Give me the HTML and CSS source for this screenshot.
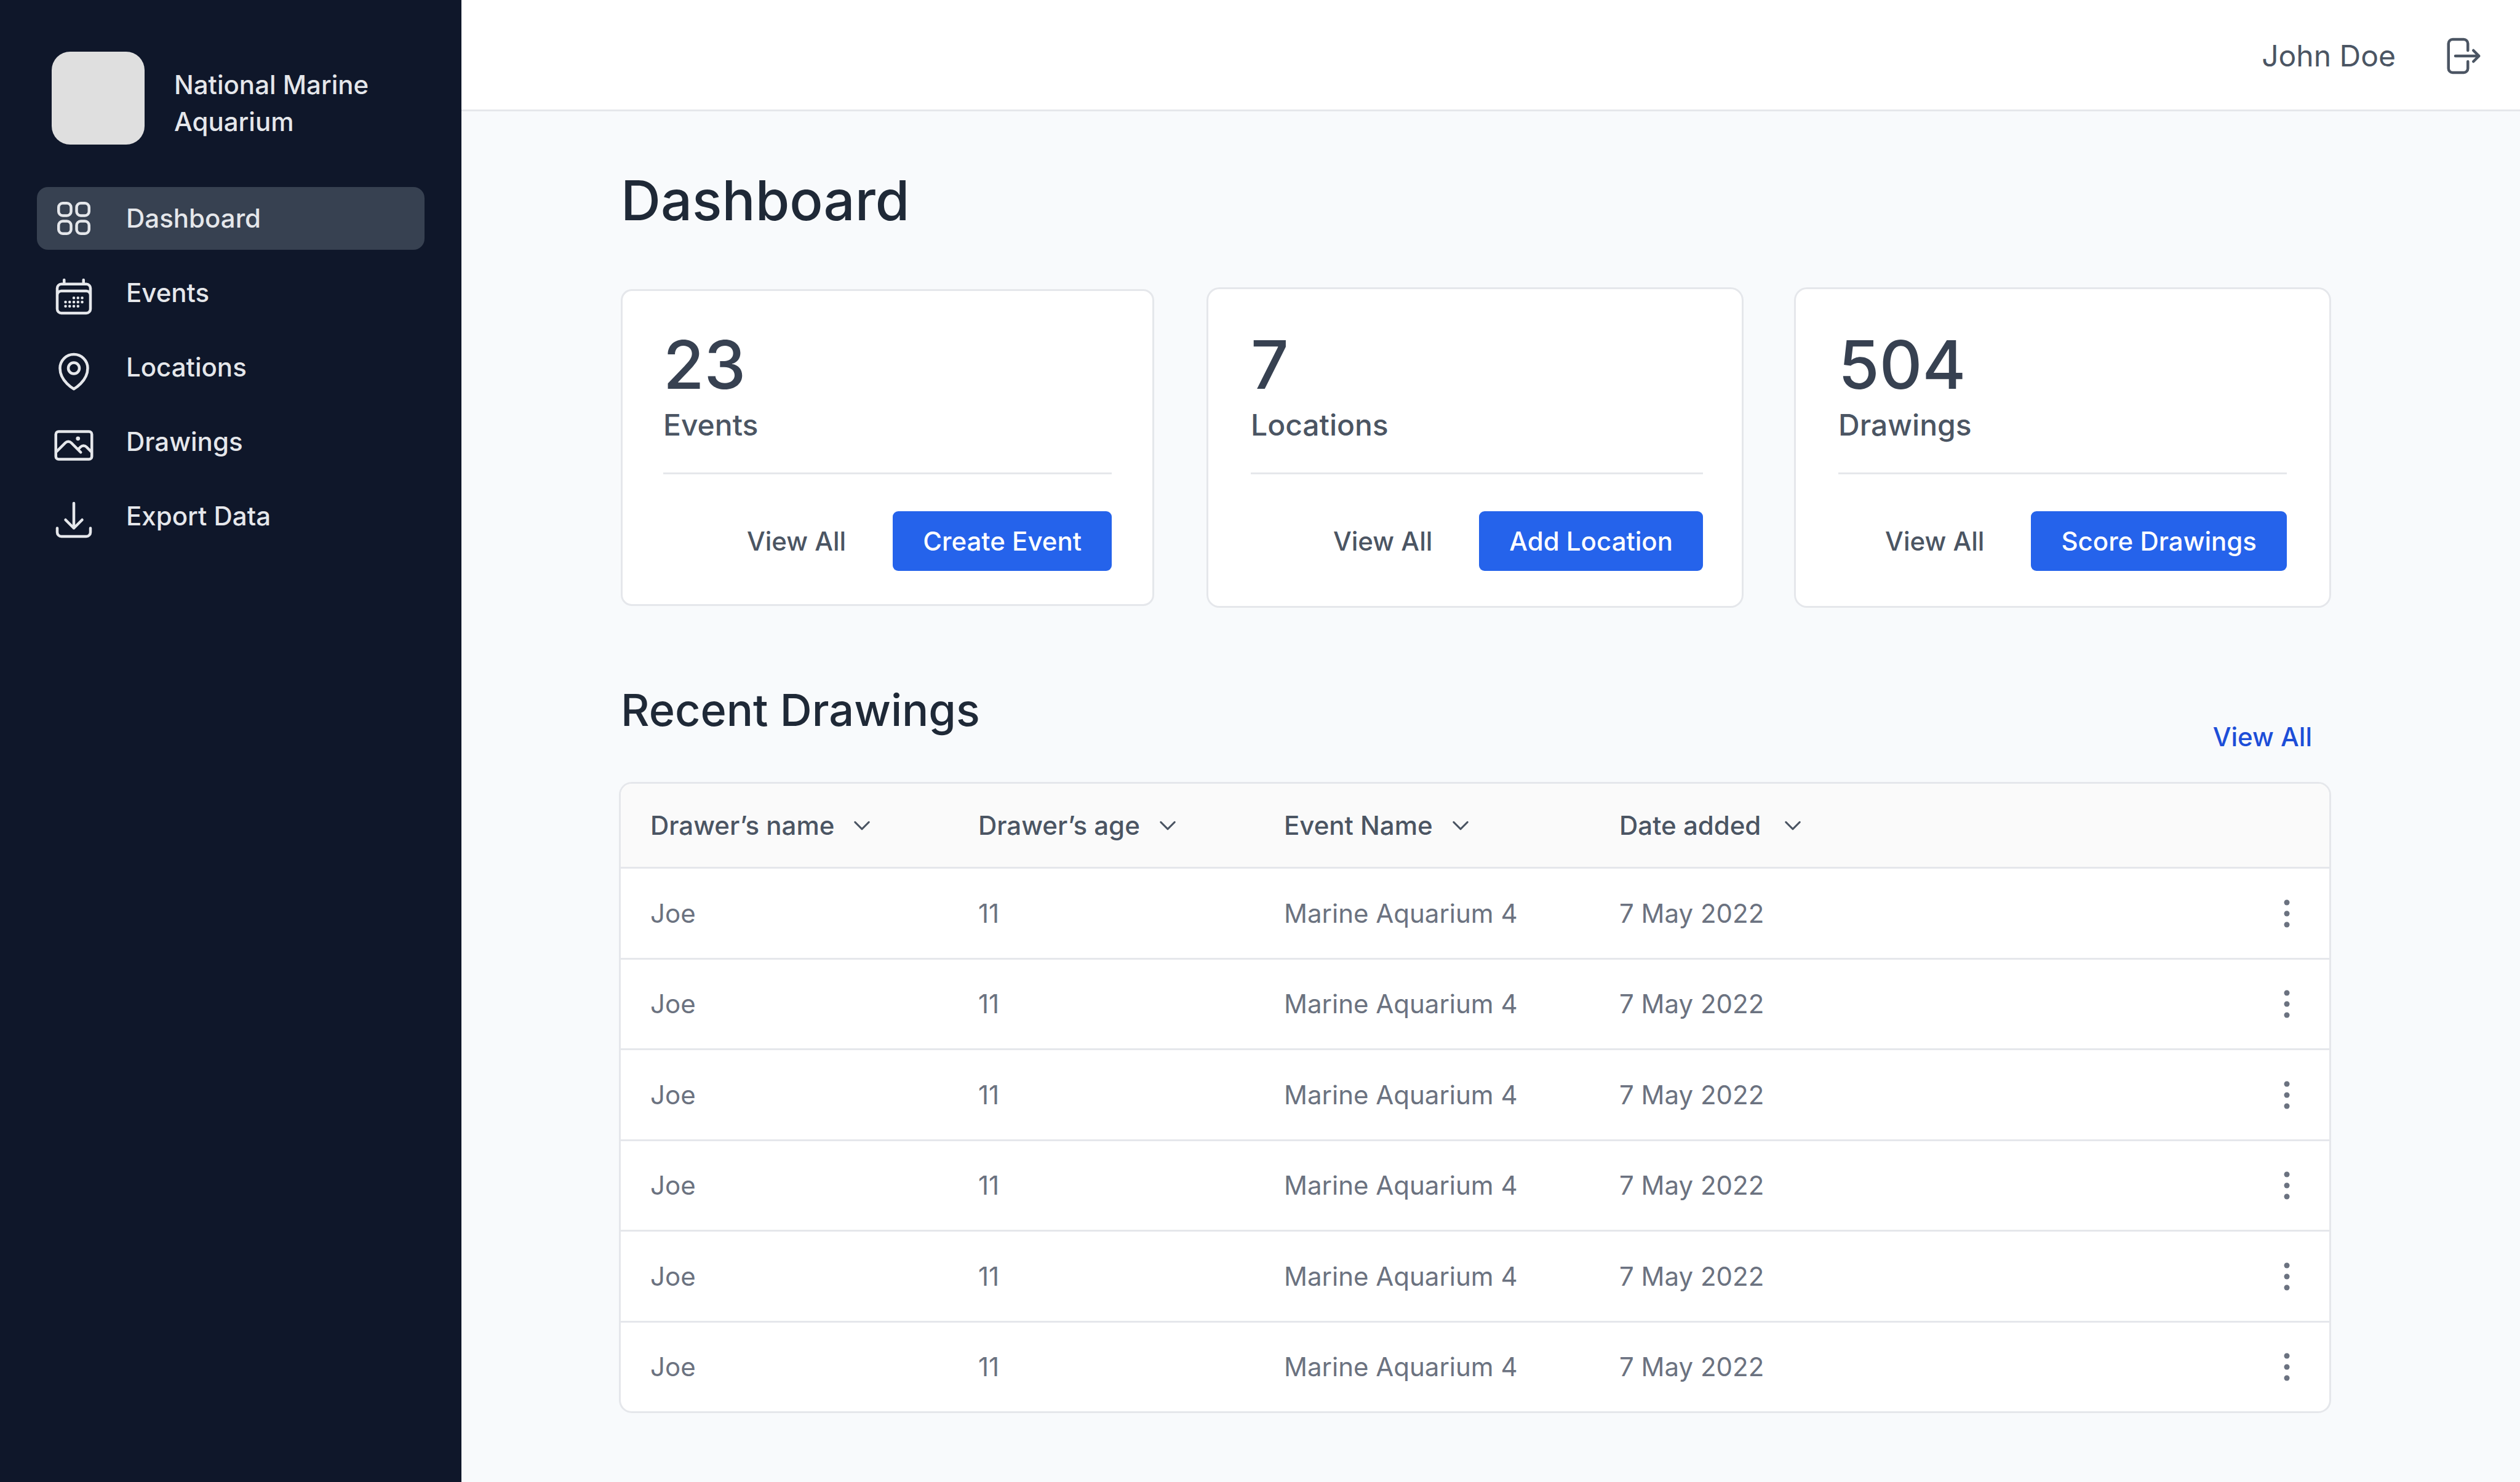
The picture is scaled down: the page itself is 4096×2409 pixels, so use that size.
FILE: index.html
```html
<!DOCTYPE html>
<html lang="en">
<head>
  <meta charset="utf-8">
  <title>Dashboard</title>
  <link rel="stylesheet" href="styles.css">
</head>
<body>
  <svg class="sprite" aria-hidden="true">
    <symbol id="chevron" viewBox="0 0 24 24"><path d="M19.5 8.25l-7.5 7.5-7.5-7.5"/></symbol>
    <symbol id="dots" viewBox="0 0 24 24"><circle cx="12" cy="6" r="1.5"/><circle cx="12" cy="12" r="1.5"/><circle cx="12" cy="18" r="1.5"/></symbol>
  </svg>
  <div class="app">
    <aside class="sidebar">
      <div class="brand">
        <div class="brand-logo"></div>
        <p class="brand-name">National Marine Aquarium</p>
      </div>
      <nav class="nav">
        <a class="nav-link active" href="#dashboard" aria-current="page">
          <svg class="icon" viewBox="0 0 24 24"><path d="M3.75 6A2.25 2.25 0 016 3.75h2.25A2.25 2.25 0 0110.5 6v2.25a2.25 2.25 0 01-2.25 2.25H6a2.25 2.25 0 01-2.25-2.25V6zM3.75 15.75A2.25 2.25 0 016 13.5h2.25a2.25 2.25 0 012.25 2.25V18a2.25 2.25 0 01-2.25 2.25H6A2.25 2.25 0 013.75 18v-2.25zM13.5 6a2.25 2.25 0 012.25-2.25H18A2.25 2.25 0 0120.25 6v2.25A2.25 2.25 0 0118 10.5h-2.25a2.25 2.25 0 01-2.25-2.25V6zM13.5 15.75a2.25 2.25 0 012.25-2.25H18a2.25 2.25 0 012.25 2.25V18A2.25 2.25 0 0118 20.25h-2.25A2.25 2.25 0 0113.5 18v-2.25z"/></svg>
          <span>Dashboard</span>
        </a>
        <a class="nav-link" href="#events">
          <svg class="icon" viewBox="0 0 24 24"><path d="M6.75 3v2.25M17.25 3v2.25M3 18.75V7.5a2.25 2.25 0 012.25-2.25h13.5A2.25 2.25 0 0121 7.5v11.25m-18 0A2.25 2.25 0 005.25 21h13.5A2.25 2.25 0 0021 18.75m-18 0v-7.5A2.25 2.25 0 015.25 9h13.5A2.25 2.25 0 0121 11.25v7.5m-9-6h.008v.008H12v-.008zM12 15h.008v.008H12V15zm0 2.25h.008v.008H12v-.008zM9.75 15h.008v.008H9.75V15zm0 2.25h.008v.008H9.75v-.008zM7.5 15h.008v.008H7.5V15zm0 2.25h.008v.008H7.5v-.008zm6.75-4.5h.008v.008h-.008v-.008zm0 2.25h.008v.008h-.008V15zm0 2.25h.008v.008h-.008v-.008zm2.25-4.5h.008v.008H16.5v-.008zm0 2.25h.008v.008H16.5V15z"/></svg>
          <span>Events</span>
        </a>
        <a class="nav-link" href="#locations">
          <svg class="icon" viewBox="0 0 24 24"><path d="M15 10.5a3 3 0 11-6 0 3 3 0 016 0z"/><path d="M19.5 10.5c0 7.142-7.5 11.25-7.5 11.25S4.5 17.642 4.5 10.5a7.5 7.5 0 1115 0z"/></svg>
          <span>Locations</span>
        </a>
        <a class="nav-link" href="#drawings">
          <svg class="icon" viewBox="0 0 24 24"><path d="M2.25 15.75l5.159-5.159a2.25 2.25 0 013.182 0l5.159 5.159m-1.5-1.5l1.409-1.409a2.25 2.25 0 013.182 0l2.909 2.909m-18 3.75h16.5a1.5 1.5 0 001.5-1.5V6a1.5 1.5 0 00-1.5-1.5H3.75A1.5 1.5 0 002.25 6v12a1.5 1.5 0 001.5 1.5zm10.5-11.25h.008v.008h-.008V8.25zm.375 0a.375.375 0 11-.75 0 .375.375 0 01.75 0z"/></svg>
          <span>Drawings</span>
        </a>
        <a class="nav-link" href="#export">
          <svg class="icon" viewBox="0 0 24 24"><path d="M3 16.5v2.25A2.25 2.25 0 005.25 21h13.5A2.25 2.25 0 0021 18.75V16.5M16.5 12L12 16.5m0 0L7.5 12m4.5 4.5V3"/></svg>
          <span>Export Data</span>
        </a>
      </nav>
    </aside>

    <div class="page">
      <header class="topbar">
        <span class="user">John Doe</span>
        <button class="icon-button" type="button" aria-label="Log out">
          <svg class="icon" viewBox="0 0 24 24"><path d="M15.75 9V5.25A2.25 2.25 0 0013.5 3h-6a2.25 2.25 0 00-2.25 2.25v13.5A2.25 2.25 0 007.5 21h6a2.25 2.25 0 002.25-2.25V15m3 0l3-3m0 0l-3-3m3 3H9"/></svg>
        </button>
      </header>

      <main class="content">
        <h1 class="title">Dashboard</h1>

        <section class="cards">
          <article class="card">
            <p class="card-count">23</p>
            <p class="card-label">Events</p>
            <div class="card-actions">
              <a class="card-link" href="#events">View All</a>
              <button class="button" type="button">Create Event</button>
            </div>
          </article>
          <article class="card ringed wide">
            <p class="card-count">7</p>
            <p class="card-label">Locations</p>
            <div class="card-actions">
              <a class="card-link" href="#locations">View All</a>
              <button class="button" type="button">Add Location</button>
            </div>
          </article>
          <article class="card ringed">
            <p class="card-count">504</p>
            <p class="card-label">Drawings</p>
            <div class="card-actions">
              <a class="card-link" href="#drawings">View All</a>
              <button class="button" type="button">Score Drawings</button>
            </div>
          </article>
        </section>

        <div class="section-head">
          <h2 class="section-title">Recent Drawings</h2>
          <a class="section-link" href="#drawings">View All</a>
        </div>

        <div class="table-frame">
          <table class="table">
            <colgroup><col class="col-name"><col class="col-age"><col class="col-event"><col class="col-date"><col class="col-menu"></colgroup>
            <thead>
              <tr>
                <th scope="col"><button class="sort" type="button">Drawer’s name<svg class="chevron"><use href="#chevron"/></svg></button></th>
                <th scope="col"><button class="sort" type="button">Drawer’s age<svg class="chevron"><use href="#chevron"/></svg></button></th>
                <th scope="col"><button class="sort" type="button">Event Name<svg class="chevron"><use href="#chevron"/></svg></button></th>
                <th scope="col"><button class="sort roomy" type="button">Date added<svg class="chevron"><use href="#chevron"/></svg></button></th>
                <td></td>
              </tr>
            </thead>
            <tbody>
              <tr><td>Joe</td><td>11</td><td>Marine Aquarium 4</td><td>7 May 2022</td><td class="menu-cell"><button class="icon-button" type="button" aria-label="Row options"><svg class="dots"><use href="#dots"/></svg></button></td></tr>
              <tr><td>Joe</td><td>11</td><td>Marine Aquarium 4</td><td>7 May 2022</td><td class="menu-cell"><button class="icon-button" type="button" aria-label="Row options"><svg class="dots"><use href="#dots"/></svg></button></td></tr>
              <tr><td>Joe</td><td>11</td><td>Marine Aquarium 4</td><td>7 May 2022</td><td class="menu-cell"><button class="icon-button" type="button" aria-label="Row options"><svg class="dots"><use href="#dots"/></svg></button></td></tr>
              <tr><td>Joe</td><td>11</td><td>Marine Aquarium 4</td><td>7 May 2022</td><td class="menu-cell"><button class="icon-button" type="button" aria-label="Row options"><svg class="dots"><use href="#dots"/></svg></button></td></tr>
              <tr><td>Joe</td><td>11</td><td>Marine Aquarium 4</td><td>7 May 2022</td><td class="menu-cell"><button class="icon-button" type="button" aria-label="Row options"><svg class="dots"><use href="#dots"/></svg></button></td></tr>
              <tr><td>Joe</td><td>11</td><td>Marine Aquarium 4</td><td>7 May 2022</td><td class="menu-cell"><button class="icon-button" type="button" aria-label="Row options"><svg class="dots"><use href="#dots"/></svg></button></td></tr>
            </tbody>
          </table>
        </div>
      </main>
    </div>
  </div>
</body>
</html>
```
FILE: styles.css
```css
*,
*::before,
*::after {
  box-sizing: border-box;
}

:root {
  --line: #e5e7eb;
  --ink: #1f2937;
  --ink-2: #374151;
  --ink-3: #4b5563;
  --ink-4: #6b7280;
}

body {
  margin: 0;
  font-family: Inter, "Liberation Sans", sans-serif;
  font-optical-sizing: none;
  font-size: 42px;
  line-height: 60px;
  color: var(--ink-3);
  background: #f8fafc;
}

h1, h2, p {
  margin: 0;
  font-weight: 500;
}

a {
  color: inherit;
  text-decoration: none;
}

button {
  margin: 0;
  padding: 0;
  border: 0;
  background: none;
  font: inherit;
  color: inherit;
  cursor: pointer;
}

.sprite {
  position: absolute;
  width: 0;
  height: 0;
}

.icon {
  display: block;
  flex: none;
  width: 72px;
  height: 72px;
  fill: none;
  stroke: currentColor;
  stroke-width: 1.5;
  stroke-linecap: round;
  stroke-linejoin: round;
}

.icon-button {
  display: block;
}

.app {
  display: flex;
  min-height: 100vh;
}

/* Sidebar */
.sidebar {
  flex: none;
  width: 750px;
  padding: 84px 60px;
  background: #0f172a;
  color: #e5e7eb;
  font-weight: 500;
}

.brand {
  display: flex;
  gap: 48px;
  padding-left: 24px;
  margin-bottom: 69px;
}

.brand-logo {
  flex: none;
  width: 151px;
  height: 151px;
  border-radius: 30px;
  background: #dfdfdf;
}

.brand-name {
  padding-top: 24px;
  max-width: 360px;
}

.nav {
  display: flex;
  flex-direction: column;
  gap: 19px;
}

.nav-link {
  display: flex;
  align-items: center;
  gap: 49px;
  height: 102px;
  padding: 0 24px;
  border-radius: 18px;
}

.nav-link.active {
  background: #374151;
}

.nav-link:not(.active) .icon {
  margin-top: 12px;
}

/* Top bar */
.page {
  flex: 1;
  min-width: 0;
}

.topbar {
  display: flex;
  align-items: center;
  justify-content: flex-end;
  gap: 70px;
  height: 181px;
  padding: 3px 60px 0;
  border-bottom: 3px solid var(--line);
  background: #fff;
}

.user {
  font-size: 48px;
}

/* Content */
.content {
  padding: 91px 310px 108px 259px;
}

.title {
  margin-bottom: 90px;
  font-size: 90px;
  line-height: 108px;
  color: var(--ink);
}

.cards {
  display: grid;
  grid-template-columns: repeat(3, 1fr);
  gap: 88px;
  margin-bottom: 127px;
}

.card {
  padding: 60px 66px 54px;
  border: 3px solid var(--line);
  border-radius: 18px;
  background: #fff;
}

.card.ringed {
  border-color: #fff;
  box-shadow: 0 0 0 3px var(--line);
}

.card.wide {
  padding-right: 60px;
}

.card-count {
  font-size: 108px;
  line-height: 120px;
  color: var(--ink-2);
}

.card-label {
  margin: 2px 0 41px;
  font-size: 48px;
  line-height: 72px;
}

.card-actions {
  display: flex;
  align-items: center;
  justify-content: flex-end;
  gap: 76px;
  padding-top: 60px;
  border-top: 3px solid var(--line);
  font-weight: 500;
}

.button {
  height: 97px;
  padding: 0 49px;
  border-radius: 9px;
  background: #2563eb;
  color: #fff;
}

.section-head {
  display: flex;
  justify-content: space-between;
  padding-right: 28px;
  margin-bottom: 43px;
}

.section-title {
  font-size: 72px;
  line-height: 84px;
  color: var(--ink);
}

.section-link {
  padding-top: 56px;
  font-weight: 500;
  color: #1d4ed8;
}

/* Table */
.table-frame {
  margin: 0 -3px;
  border: 3px solid var(--line);
  border-radius: 21px;
  background: #fff;
  overflow: hidden;
}

.table {
  width: 100%;
  table-layout: fixed;
  border-collapse: separate;
  border-spacing: 0;
  color: var(--ink-4);
}

.col-name { width: 581px; }
.col-age { width: 497px; }
.col-event { width: 545px; }
.col-date { width: 545px; }

.table th,
.table td {
  height: 148px;
  padding: 0;
  border-bottom: 3px solid var(--line);
  text-align: left;
  vertical-align: middle;
}

.table th:first-child,
.table td:first-child {
  padding-left: 48px;
}

.table thead th,
.table thead td {
  height: 138px;
  background: #fafafa;
  color: var(--ink-3);
  font-weight: 500;
}

.table tbody tr:nth-child(even) td {
  height: 147px;
}

.table tbody tr:last-child td {
  height: 144px;
  border-bottom: 0;
}

.sort {
  display: flex;
  align-items: center;
  gap: 27px;
}

.sort.roomy {
  gap: 34px;
}

.chevron {
  width: 36px;
  height: 36px;
  fill: none;
  stroke: currentColor;
  stroke-width: 2;
  stroke-linecap: round;
  stroke-linejoin: round;
}

.table .menu-cell {
  padding-right: 33px;
}

.menu-cell .icon-button {
  margin-left: auto;
}

.dots {
  display: block;
  width: 72px;
  height: 72px;
  fill: currentColor;
}
```
